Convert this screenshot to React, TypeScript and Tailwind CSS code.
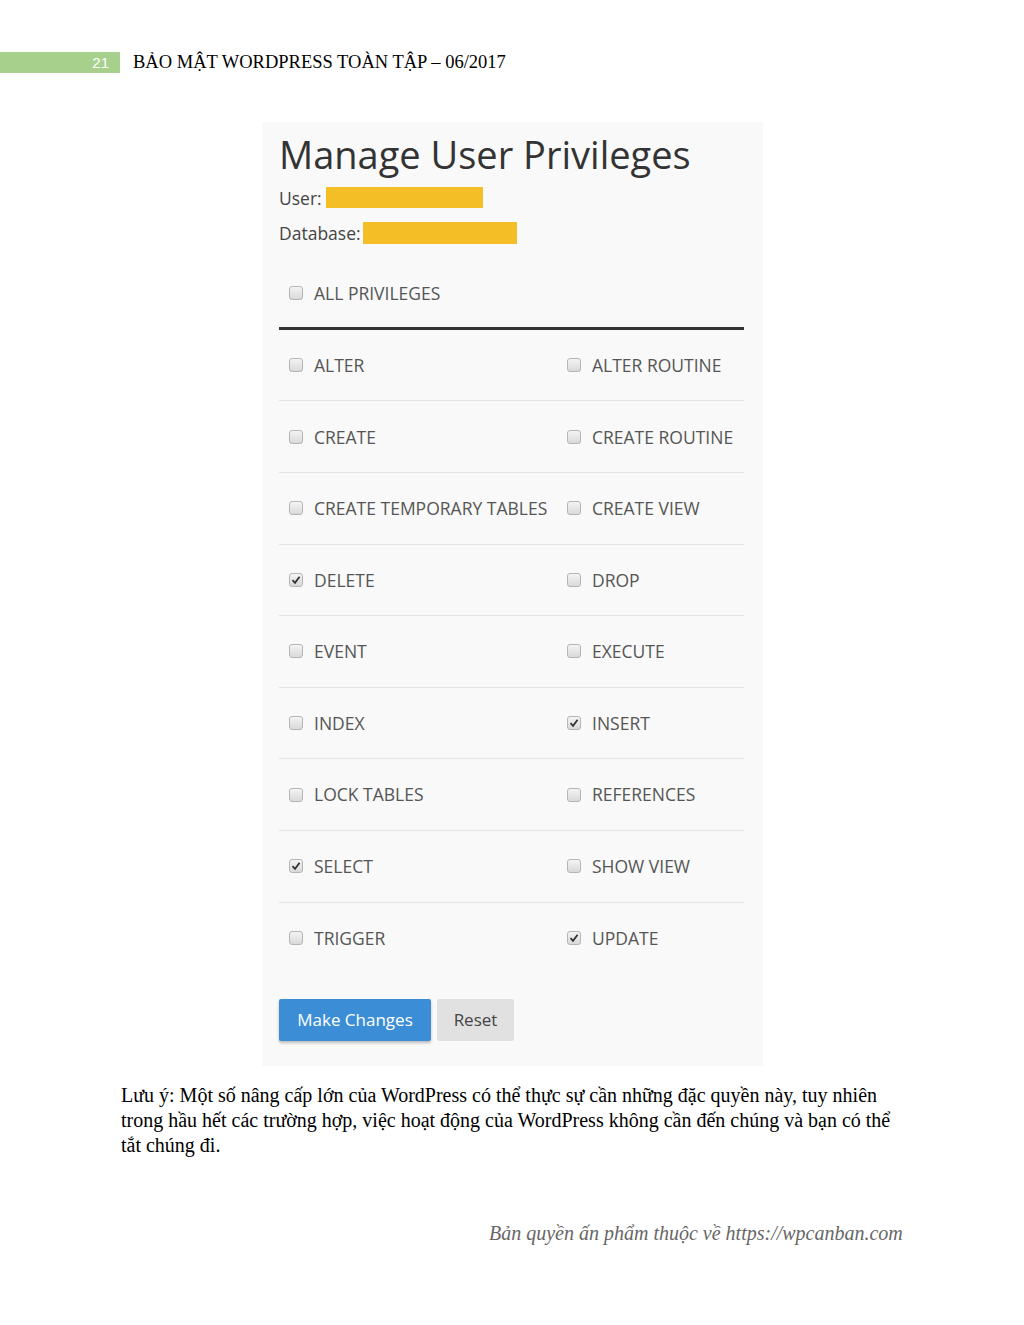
import React from "react";

const rows: [string, boolean, string, boolean][] = [
  ["ALTER", false, "ALTER ROUTINE", false],
  ["CREATE", false, "CREATE ROUTINE", false],
  ["CREATE TEMPORARY TABLES", false, "CREATE VIEW", false],
  ["DELETE", true, "DROP", false],
  ["EVENT", false, "EXECUTE", false],
  ["INDEX", false, "INSERT", true],
  ["LOCK TABLES", false, "REFERENCES", false],
  ["SELECT", true, "SHOW VIEW", false],
  ["TRIGGER", false, "UPDATE", true],
];

function Box({ checked }: { checked: boolean }) {
  return (
    <span className="flex size-[14px] shrink-0 items-center justify-center rounded-[3px] border border-[#b5b5b5] bg-[linear-gradient(to_bottom,#f4f4f4,#d9d9d9)]">
      {checked && (
        <svg width="10" height="10" viewBox="0 0 10 10">
          <path d="M1.5 5.2 L4 7.8 L8.6 1.8" fill="none" stroke="#333" strokeWidth="1.8" />
        </svg>
      )}
    </span>
  );
}

function Priv({ label, checked }: { label: string; checked: boolean }) {
  return (
    <div className="flex items-center gap-[11px] pl-[10px]">
      <Box checked={checked} />
      <span className="whitespace-nowrap text-[17.5px] text-[#555]">{label}</span>
    </div>
  );
}

export default function App() {
  return (
    <div className="min-h-[1325px] w-[1024px] bg-white">
      <div className="flex items-center pt-[49px]">
        <div className="flex h-[21px] w-[120px] items-center justify-end bg-[#a8d08d] pr-[11px] font-['Liberation_Sans',sans-serif] text-[15px] text-white">
          21
        </div>
        <div className="pl-[13px] font-['Liberation_Serif',serif] text-[18.5px] text-black">
          BẢO MẬT WORDPRESS TOÀN TẬP – 06/2017
        </div>
      </div>

      <div className="ml-[262px] mt-[45px] w-[501px] bg-[#f9f9f9] pb-[25px] pl-[17px] pr-[19px] pt-[6px] font-['Open_Sans',sans-serif]">
        <h1 className="text-[38px] leading-[52px] text-[#333]">Manage User Privileges</h1>
        <div className="mt-[7px] flex h-[22px] items-center text-[17.5px] text-[#444]">
          User:
          <span className="ml-[4px] h-[21px] w-[157px] bg-[#f4be27]" />
        </div>
        <div className="mt-[13px] flex h-[22px] items-center text-[17.5px] text-[#444]">
          Database:
          <span className="ml-[2px] h-[22px] w-[154px] bg-[#f4be27]" />
        </div>
        <div className="mt-[36px] h-[47px]">
          <Priv label="ALL PRIVILEGES" checked={false} />
        </div>
        <div className="border-t-[3px] border-[#333]" />
        {rows.map((r, i) => (
          <div
            key={r[0]}
            className={`grid h-[71.6px] grid-cols-[278px_1fr] items-center ${i < rows.length - 1 ? "border-b border-[#e4e4e4]" : ""}`}
          >
            <Priv label={r[0]} checked={r[1]} />
            <Priv label={r[2]} checked={r[3]} />
          </div>
        ))}
        <div className="mt-[25px] flex gap-[6px]">
          <button className="h-[42px] w-[152px] rounded-[2px] bg-[#3b8ed6] text-[17px] text-white shadow-[0_2px_3px_rgba(0,0,0,0.25)]">
            Make Changes
          </button>
          <button className="h-[42px] w-[77px] rounded-[2px] bg-[#e1e1e1] text-[17px] text-[#444]">Reset</button>
        </div>
      </div>

      <p className="ml-[121px] mt-[17px] font-['Liberation_Serif',serif] text-[20px] leading-[25px] text-black">
        Lưu ý: Một số nâng cấp lớn của WordPress có thể thực sự cần những đặc quyền này, tuy nhiên
        <br />
        trong hầu hết các trường hợp, việc hoạt động của WordPress không cần đến chúng và bạn có thể
        <br />
        tắt chúng đi.
      </p>

      <p className="ml-[489px] mt-[60px] font-['Liberation_Serif',serif] text-[20px] italic text-[#666]">
        Bản quyền ấn phẩm thuộc về https://wpcanban.com
      </p>
    </div>
  );
}
